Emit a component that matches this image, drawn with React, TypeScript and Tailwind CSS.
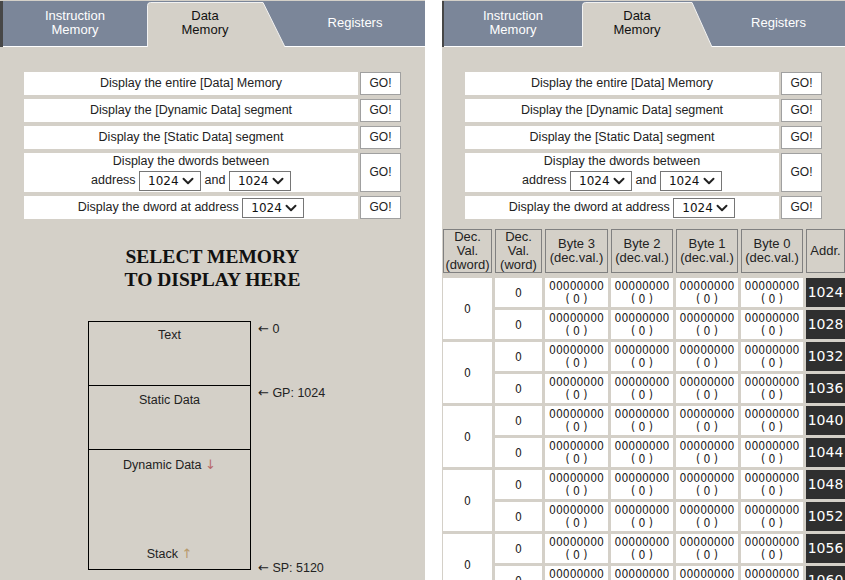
import React from 'react';
import { ChevronDown } from 'lucide-react';

function TabBar({ side }: { side: 'left' | 'right' }) {
  const left = side === 'left';
  // active tab: flat top then slanted right edge
  const w = left ? 138 : 130;
  const flat = left ? 116 : 110;
  return (
    <div className="pt-px">
      <div
        className={`flex h-[46px] bg-[#7b8699] font-['Liberation_Sans'] text-[13px] leading-[14px] ${
          left ? 'border-l-[3px]' : 'border-l-2'
        } border-[#474747]`}
      >
        <div
          className={`${left ? 'w-[144px]' : 'w-[138px]'} flex shrink-0 items-center justify-center border-b border-white pb-[2px] text-center text-white`}
        >
          Instruction
          <br />
          Memory
        </div>
        <div className={`relative ${left ? 'w-[138px]' : 'w-[130px]'} shrink-0`}>
          <svg className="absolute left-0 top-0" width={w} height={46}>
            <path d={`M${w} 45.5 H0`} stroke="#ffffff" strokeWidth="1" />
            <path
              d={`M0.5 46 V4.5 Q0.5 1.5 3.5 1.5 H${flat} L${w} 46`}
              fill="#d4d0c8"
              stroke="#f2f2f2"
              strokeWidth="1"
            />
          </svg>
          <div
            className={`relative flex h-full ${left ? 'w-[116px]' : 'w-[110px]'} items-center justify-center pb-[3px] text-center text-[#111]`}
          >
            Data
            <br />
            Memory
          </div>
        </div>
        <div className="flex flex-1 items-center justify-center border-b border-white pb-[2px] text-white">
          Registers
        </div>
      </div>
    </div>
  );
}

function AddrSelect() {
  return (
    <span className="relative inline-block h-[20px] w-[62px] align-middle">
      <select
        defaultValue="1024"
        className="h-[20px] w-[62px] appearance-none rounded-none border border-[#767676] bg-white pl-[8px] font-['DejaVu_Sans'] text-[12px] leading-[18px] text-[#111] outline-none"
      >
        <option>1024</option>
      </select>
      <ChevronDown
        size={18}
        strokeWidth={2.6}
        className="pointer-events-none absolute right-[4px] top-[1px] text-[#222]"
      />
    </span>
  );
}

function GoButton() {
  return (
    <button className="h-full w-full border border-[#a0a0a0] bg-white font-['Liberation_Sans'] text-[12px] text-[#222]">
      GO!
    </button>
  );
}

function Menu({ pad }: { pad: string }) {
  const cell = 'flex items-center justify-center bg-white text-center';
  return (
    <div
      className={`grid grid-cols-[1fr_41px] grid-rows-[23px_23px_23px_39px_23px] gap-x-[2px] gap-y-[4px] pt-[25px] font-['Liberation_Sans'] text-[12.5px] leading-[15px] text-[#222] ${pad}`}
    >
      <div className={cell}>Display the entire [Data] Memory</div>
      <GoButton />
      <div className={cell}>Display the [Dynamic Data] segment</div>
      <GoButton />
      <div className={cell}>Display the [Static Data] segment</div>
      <GoButton />
      <div className={`${cell} flex-col gap-[2px]`}>
        <span>Display the dwords between</span>
        <span>
          address <AddrSelect /> and <AddrSelect />
        </span>
      </div>
      <GoButton />
      <div className={cell}>
        <span>
          Display the dword at address <AddrSelect />
        </span>
      </div>
      <GoButton />
    </div>
  );
}

function MemoryMap() {
  const arrow = "font-['DejaVu_Sans'] text-[13px]";
  return (
    <div className="mt-[30px] flex pl-[88px] font-['Liberation_Sans'] text-[12.5px] leading-[15px] text-[#222]">
      <div className="flex h-[249px] w-[163px] flex-col border border-black text-center">
        <div className="h-[64px] border-b border-black pt-[6px]">Text</div>
        <div className="h-[64px] border-b border-black pt-[7px]">Static Data</div>
        <div className="flex flex-1 flex-col justify-between pb-[7px] pt-[7px]">
          <span>
            Dynamic Data <span className={`${arrow} text-[#b86a6a]`}>↓</span>
          </span>
          <span>
            Stack <span className={`${arrow} text-[#b89a6c]`}>↑</span>
          </span>
        </div>
      </div>
      <div className="ml-[7px] flex flex-col">
        <div className="h-[64px]">
          <span className={arrow}>←</span> 0
        </div>
        <div className="h-[175px]">
          <span className={arrow}>←</span> GP: 1024
        </div>
        <div>
          <span className={arrow}>←</span> SP: 5120
        </div>
      </div>
    </div>
  );
}

const headers = [
  ['Dec.', 'Val.', '(dword)'],
  ['Dec.', 'Val.', '(word)'],
  ['Byte 3', '(dec.val.)'],
  ['Byte 2', '(dec.val.)'],
  ['Byte 1', '(dec.val.)'],
  ['Byte 0', '(dec.val.)'],
  ['Addr.'],
];

function ByteCell() {
  return (
    <div className="flex flex-col items-center justify-center bg-white leading-[13px]">
      <span>00000000</span>
      <span>( 0 )</span>
    </div>
  );
}

function Row({ addr }: { addr: number }) {
  return (
    <>
      <div className="flex items-center justify-center bg-white">0</div>
      <ByteCell />
      <ByteCell />
      <ByteCell />
      <ByteCell />
      <div className="flex items-center justify-center bg-[#2f2f2f] font-['DejaVu_Sans'] text-[14px] text-white">
        {addr}
      </div>
    </>
  );
}

function DataTable() {
  const groups = [1024, 1032, 1040, 1048, 1056];
  return (
    <div className="ml-px mt-[10px]">
      <div className="grid h-[43px] grid-cols-[49px_47px_63px_62px_62px_62px_39px] gap-x-[3px] font-['Liberation_Sans'] text-[13px] leading-[14px] text-[#222]">
        {headers.map((lines, i) => (
          <div key={i} className="flex flex-col items-center justify-center border border-[#808080] text-center">
            {lines.map((l) => (
              <span key={l}>{l}</span>
            ))}
          </div>
        ))}
      </div>
      <div className="mt-[6px] flex flex-col gap-[3px] font-['DejaVu_Sans_Condensed','DejaVu_Sans',sans-serif] text-[12px] text-[#222]">
        {groups.map((g) => (
          <div
            key={g}
            className="grid grid-cols-[49px_47px_63px_62px_62px_62px_39px] grid-rows-[29px_29px] gap-[3px]"
          >
            <div className="row-span-2 flex items-center justify-center bg-white">0</div>
            <Row addr={g} />
            <Row addr={g + 4} />
          </div>
        ))}
      </div>
    </div>
  );
}

export default function App() {
  return (
    <div className="flex h-[580px] w-[845px] overflow-hidden bg-white">
      <div className="h-full w-[425px] shrink-0 bg-[#d4d0c8]">
        <TabBar side="left" />
        <Menu pad="px-6" />
        <h2 className="mt-[26px] text-center font-['Liberation_Serif'] text-[19.5px] font-bold leading-[23px] text-[#111]">
          SELECT MEMORY
          <br />
          TO DISPLAY HERE
        </h2>
        <MemoryMap />
      </div>
      <div className="w-[17px] shrink-0" />
      <div className="h-full w-[403px] shrink-0 bg-[#d4d0c8]">
        <TabBar side="right" />
        <Menu pad="pl-[23px] pr-[23px]" />
        <DataTable />
      </div>
    </div>
  );
}
